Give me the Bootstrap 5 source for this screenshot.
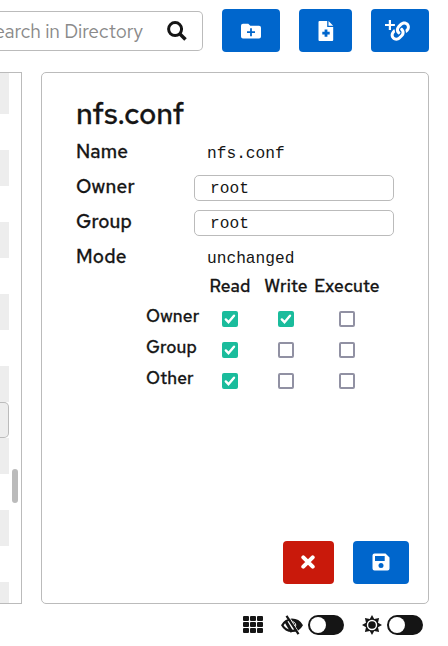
<!DOCTYPE html>
<html lang="en">
<head>
<meta charset="utf-8">
<meta name="viewport" content="width=device-width, initial-scale=1">
<title>File navigator</title>
<link rel="stylesheet" href="https://cdn.jsdelivr.net/npm/bootstrap@5.3.0/dist/css/bootstrap.min.css">
<style>
body{font-family:"Red Hat Text",Inter,sans-serif;color:#151515;background:#fff;height:646px;line-height:1.5}
.topbar{height:72px;padding:9px 19px 0 0;gap:19px}
.search{width:203px;height:40px;margin-top:2px;border:1px solid #bbb;border-left:0;border-radius:0 5px 5px 0;padding-right:15px}
.search-text{color:#8a8a8a;font-size:19.2px;white-space:nowrap;letter-spacing:-.1px;width:143px;padding-top:1px}
.btn.tool{height:43px;width:58px;padding:0;border:0;border-radius:4px;background:#06c}
.btn.tool svg{display:block}
.btn.file-btn{width:53px}
.btn.cancel-btn{width:51px;padding:0 1px 1px 0;background:#c9190b}
.btn.save-btn{width:56px;padding-bottom:2px}
.workspace{height:532px;gap:19px}
.listing{width:22px;border:1px solid #bbb;border-left:0;overflow:hidden}
.stripes{width:9px}
.stripes>div{height:36px;flex:none}
.stripes>.first{height:41px}
.odd{background:#ededed}
.chosen{background:#ededed;border:1px solid #bbb;border-left:0;border-radius:0 5px 5px 0}
.thumb{width:6px;height:34px;margin:396px 0 0 3px;border-radius:3px;background:#bbb}
.props{width:388px;border:1px solid #bbb;border-radius:5px;padding:24px 34px 19px}
.props h2{font-size:29.5px;font-weight:500;line-height:34px;height:43px;-webkit-text-stroke:.3px}
.field{height:35px;font-size:19px;font-weight:500}
.field>label{width:118px;line-height:24px;letter-spacing:.2px;-webkit-text-stroke:.3px}
.mono{font:16.2px/28px "Liberation Mono",monospace;padding-left:13px}
.owner-box{width:200px;height:26px;border:1px solid #bbb;border-radius:5px;padding:2px 15px 0;font:16.2px/23px "Liberation Mono",monospace;color:#151515;background:#fff}
.perms{display:grid;grid-template-columns:56px 56px 56px 66px;grid-template-rows:31px repeat(3,31px);margin:-6px 0 0 70px;font-size:17.3px;font-weight:500;line-height:24px;justify-items:center;letter-spacing:.15px;-webkit-text-stroke:.3px}
.perms .rowname{justify-self:start;margin-top:-1px}
.perms .form-check-input{width:16px;height:16px;margin:6px 0 0;border:2px solid #9191a3;border-radius:2px;background-color:#fff}
.perms .form-check-input:checked{background-color:#1abc9c;border-color:#1abc9c;background-image:url("data:image/svg+xml,%3Csvg xmlns='http://www.w3.org/2000/svg' viewBox='0 0 12 12'%3E%3Cpath d='m1.8 6.4 2.7 2.8 5.500-6.500' fill='none' stroke='%23fff' stroke-width='2.4' stroke-linecap='round'/%3E%3C/svg%3E")}
.actions{gap:19px;margin-right:-15px}
.foot{height:42px;padding-right:25px}
.foot svg{display:block}
.eye-icon{margin:0 5px 0 18px}
.sun-icon{margin:0 5px 0 18px}
.toggle{width:36px;height:20px;border:2px solid #151515;border-radius:10px;background:#151515}
.toggle span{display:block;width:16px;height:16px;border-radius:50%;background:#fff}
</style>
<script src="https://cdn.jsdelivr.net/npm/bootstrap@5.3.0/dist/js/bootstrap.bundle.min.js"></script>
</head>
<body class="overflow-hidden">
<header class="topbar d-flex align-items-start">
  <div class="search d-flex align-items-center justify-content-between overflow-hidden flex-shrink-0">
    <div class="search-text d-flex justify-content-end">Search in Directory</div>
    <svg width="20" height="20" viewBox="0 0 20 20" fill="none" stroke="#151515" stroke-width="3"><circle cx="8.1" cy="8.1" r="6.5"/><path d="m12.7 12.7 5.8 5.8" stroke-width="3.5"/></svg>
  </div>
  <button class="btn tool d-flex align-items-center justify-content-center flex-shrink-0" aria-label="New folder"><svg width="20" height="16" viewBox="0 0 20 16"><path fill="#fff" d="M2 .8h5.3l2 2H18a2 2 0 0 1 2 2v8.8a2 2 0 0 1-2 2H2a2 2 0 0 1-2-2V2.8a2 2 0 0 1 2-2z"/><path d="M10 5.2v8M6 9.2h8" stroke="#06c" stroke-width="1.8"/></svg></button>
  <button class="btn tool file-btn d-flex align-items-center justify-content-center flex-shrink-0" aria-label="New file"><svg width="16" height="20" viewBox="0 0 16 20"><path fill="#fff" d="M1.5 0h7.7v6h6v13a1 1 0 0 1-1 1H1.5a1 1 0 0 1-1-1V1a1 1 0 0 1 1-1zM10.5 0l4.7 4.8h-4.7z"/><path d="M8 8.4v7.4M4.3 12.1h7.4" stroke="#06c" stroke-width="2.8"/></svg></button>
  <button class="btn tool d-flex align-items-center justify-content-center flex-shrink-0" aria-label="New link"><svg width="30" height="22" viewBox="0 0 30 22"><path d="M4.900 0v10M-.1 5h10" stroke="#fff" stroke-width="2.200"/><path fill="#fff" transform="translate(5.600 1.400) scale(.0378)" d="M326.612 185.391c59.747 59.809 58.927 155.698.36 214.59-.11.12-.24.25-.36.37l-67.2 67.2c-59.27 59.27-155.699 59.262-214.96 0-59.27-59.26-59.27-155.7 0-214.96l37.106-37.106c9.84-9.84 26.786-3.3 27.294 10.606.648 17.722 3.826 35.527 9.69 52.721 1.986 5.822.567 12.262-3.783 16.612l-13.087 13.087c-28.026 28.026-28.905 73.66-1.155 101.96 28.024 28.579 74.086 28.749 102.325.51l67.2-67.19c28.191-28.191 28.073-73.757 0-101.83-3.701-3.694-7.429-6.564-10.341-8.569a16.037 16.037 0 0 1-6.947-12.606c-.396-10.567 3.348-21.456 11.698-29.806l21.054-21.055c5.521-5.521 14.182-6.199 20.584-1.731a152.482 152.482 0 0 1 20.522 17.197zM467.547 44.449c-59.261-59.262-155.69-59.27-214.96 0l-67.2 67.2c-.12.12-.25.25-.36.37-58.566 58.892-59.387 154.781.36 214.59a152.454 152.454 0 0 0 20.521 17.196c6.402 4.468 15.064 3.789 20.584-1.731l21.054-21.055c8.35-8.35 12.094-19.239 11.698-29.806a16.037 16.037 0 0 0-6.947-12.606c-2.912-2.005-6.64-4.875-10.341-8.569-28.073-28.073-28.191-73.639 0-101.83l67.2-67.19c28.239-28.239 74.3-28.069 102.325.51 27.75 28.3 26.872 73.934-1.155 101.96l-13.087 13.087c-4.35 4.35-5.769 10.79-3.783 16.612 5.864 17.194 9.042 34.999 9.69 52.721.509 13.906 17.454 20.446 27.294 10.606l37.106-37.106c59.271-59.259 59.271-155.699.001-214.959z"/></svg></button>
</header>
<main class="workspace d-flex">
  <section class="listing d-flex align-items-start flex-shrink-0">
    <div class="stripes d-flex flex-column">
      <div class="odd first"></div><div></div><div class="odd"></div><div></div><div class="odd"></div><div></div><div class="odd"></div><div></div><div class="odd"></div><div class="chosen"></div><div class="odd"></div><div></div><div class="odd"></div><div></div><div class="odd"></div>
    </div>
    <div class="thumb"></div>
  </section>
  <section class="props d-flex flex-column">
    <h2 class="mb-0">nfs.conf</h2>
    <div class="field d-flex"><label>Name</label><span class="mono">nfs.conf</span></div>
    <div class="field d-flex"><label for="o">Owner</label><input id="o" class="owner-box" value="root"></div>
    <div class="field d-flex"><label for="g">Group</label><input id="g" class="owner-box" value="root"></div>
    <div class="field d-flex"><label>Mode</label><span class="mono">unchanged</span></div>
    <div class="perms">
      <span></span><span>Read</span><span>Write</span><span>Execute</span>
      <span class="rowname">Owner</span><input class="form-check-input" type="checkbox" checked><input class="form-check-input" type="checkbox" checked><input class="form-check-input" type="checkbox">
      <span class="rowname">Group</span><input class="form-check-input" type="checkbox" checked><input class="form-check-input" type="checkbox"><input class="form-check-input" type="checkbox">
      <span class="rowname">Other</span><input class="form-check-input" type="checkbox" checked><input class="form-check-input" type="checkbox"><input class="form-check-input" type="checkbox">
    </div>
    <div class="actions d-flex justify-content-end mt-auto">
      <button class="btn tool cancel-btn d-flex align-items-center justify-content-center" aria-label="Cancel"><svg width="14" height="14" viewBox="0 0 14 14"><path d="m2.3 2.3 9.4 9.4m0-9.4-9.4 9.4" stroke="#fff" stroke-width="4" stroke-linecap="round"/></svg></button>
      <button class="btn tool save-btn d-flex align-items-center justify-content-center" aria-label="Save"><svg width="18" height="18" viewBox="0 0 18 18"><path fill="#fff" d="M2.500.5h11l4 4v11a2 2 0 0 1-2 2h-13a2 2 0 0 1-2-2v-13a2 2 0 0 1 2-2z"/><path fill="#06c" d="M3 3h9.700v5H3z"/><circle cx="9" cy="12.500" r="2.500" fill="#06c"/></svg></button>
    </div>
  </section>
</main>
<footer class="foot d-flex align-items-center justify-content-end">
  <svg class="grid-icon" width="20" height="18" viewBox="0 0 20 18" fill="#151515"><rect width="6" height="5" rx="1"/><rect x="7" width="6" height="5" rx="1"/><rect x="14" width="6" height="5" rx="1"/><rect y="6" width="6" height="5" rx="1"/><rect x="7" y="6" width="6" height="5" rx="1"/><rect x="14" y="6" width="6" height="5" rx="1"/><rect y="12" width="6" height="5" rx="1"/><rect x="7" y="12" width="6" height="5" rx="1"/><rect x="14" y="12" width="6" height="5" rx="1"/></svg>
  <svg class="eye-icon" width="22" height="20" viewBox="0 0 22 20"><path fill="none" stroke="#151515" stroke-width="2.2" d="M1.300 10.200C5.500 2.600 16.500 2.600 20.700 10.200 16.500 17.800 5.500 17.800 1.300 10.200z"/><path fill="#151515" d="M11 4.500c5 0 7.500 3 9.500 5.700-1.500 2.800-4 4.800-7 5.500z"/><path fill="none" stroke="#fff" stroke-width="1" d="M12 6.800a3.500 3.500 0 0 1 2.500 4.800"/><path d="m4.500 6 6.500 11" stroke="#151515" stroke-width="3"/><path d="m7.600 1 11.200 18" stroke="#fff" stroke-width="1"/><path d="m5.500.8 12 18.400" stroke="#151515" stroke-width="2.200"/></svg>
  <div class="toggle"><span></span></div>
  <svg class="sun-icon" width="20" height="20" viewBox="0 0 20 20" fill="#151515"><path d="m10 0 2.200 4 4.900-1.100L16 7.700l4 2.300-4 2.300 1.100 4.800-4.900-1.100L10 20l-2.200-4-4.900 1.100L4 12.300 0 10l4-2.300-1.100-4.800L7.800 4z"/><circle cx="10" cy="10" r="4.500" fill="none" stroke="#fff" stroke-width="1.400"/></svg>
  <div class="toggle"><span></span></div>
</footer>
</body>
</html>
